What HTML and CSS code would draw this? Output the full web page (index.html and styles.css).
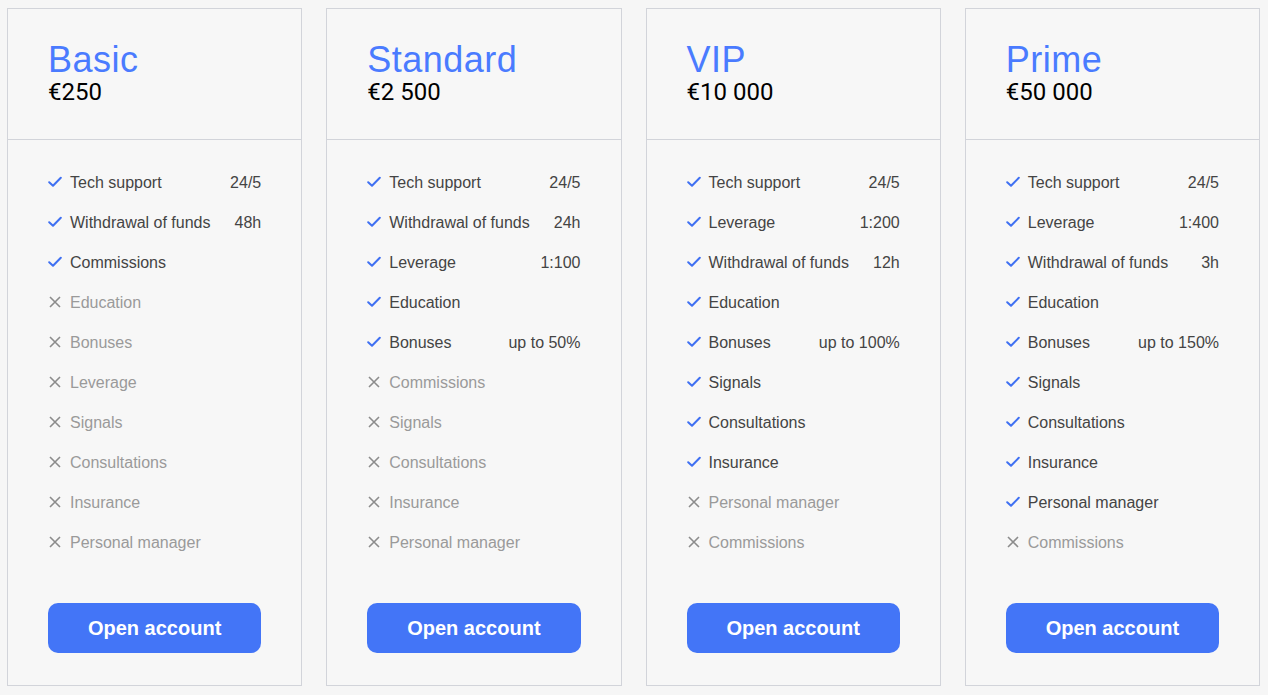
FILE: index.html
```html
<!DOCTYPE html>
<html lang="en">
<head>
<meta charset="utf-8">
<title>Plans</title>
<link rel="stylesheet" href="styles.css">
</head>
<body>
<svg width="0" height="0" class="defs">
  <defs>
    <symbol id="ok" viewBox="0 0 14 12"><path d="M1.2 6.2 L5 9.8 L12.8 1.8" fill="none" stroke="currentColor" stroke-width="2" stroke-linecap="round" stroke-linejoin="round"/></symbol>
    <symbol id="no" viewBox="0 0 14 12"><path d="M2 1 L12 11 M12 1 L2 11" fill="none" stroke="currentColor" stroke-width="1.6"/></symbol>
  </defs>
</svg>
<div class="plans">
  <div class="card">
    <div class="head"><div class="name">Basic</div><div class="price">€250</div></div>
    <ul class="list">
      <li class="on"><svg class="ic"><use href="#ok"/></svg><span>Tech support</span><span class="val">24/5</span></li>
      <li class="on"><svg class="ic"><use href="#ok"/></svg><span>Withdrawal of funds</span><span class="val">48h</span></li>
      <li class="on"><svg class="ic"><use href="#ok"/></svg><span>Commissions</span></li>
      <li class="off"><svg class="ic"><use href="#no"/></svg><span>Education</span></li>
      <li class="off"><svg class="ic"><use href="#no"/></svg><span>Bonuses</span></li>
      <li class="off"><svg class="ic"><use href="#no"/></svg><span>Leverage</span></li>
      <li class="off"><svg class="ic"><use href="#no"/></svg><span>Signals</span></li>
      <li class="off"><svg class="ic"><use href="#no"/></svg><span>Consultations</span></li>
      <li class="off"><svg class="ic"><use href="#no"/></svg><span>Insurance</span></li>
      <li class="off"><svg class="ic"><use href="#no"/></svg><span>Personal manager</span></li>
    </ul>
    <div class="foot"><a class="btn" href="#">Open account</a></div>
  </div>
  <div class="card">
    <div class="head"><div class="name">Standard</div><div class="price">€2 500</div></div>
    <ul class="list">
      <li class="on"><svg class="ic"><use href="#ok"/></svg><span>Tech support</span><span class="val">24/5</span></li>
      <li class="on"><svg class="ic"><use href="#ok"/></svg><span>Withdrawal of funds</span><span class="val">24h</span></li>
      <li class="on"><svg class="ic"><use href="#ok"/></svg><span>Leverage</span><span class="val">1:100</span></li>
      <li class="on"><svg class="ic"><use href="#ok"/></svg><span>Education</span></li>
      <li class="on"><svg class="ic"><use href="#ok"/></svg><span>Bonuses</span><span class="val">up to 50%</span></li>
      <li class="off"><svg class="ic"><use href="#no"/></svg><span>Commissions</span></li>
      <li class="off"><svg class="ic"><use href="#no"/></svg><span>Signals</span></li>
      <li class="off"><svg class="ic"><use href="#no"/></svg><span>Consultations</span></li>
      <li class="off"><svg class="ic"><use href="#no"/></svg><span>Insurance</span></li>
      <li class="off"><svg class="ic"><use href="#no"/></svg><span>Personal manager</span></li>
    </ul>
    <div class="foot"><a class="btn" href="#">Open account</a></div>
  </div>
  <div class="card">
    <div class="head"><div class="name">VIP</div><div class="price">€10 000</div></div>
    <ul class="list">
      <li class="on"><svg class="ic"><use href="#ok"/></svg><span>Tech support</span><span class="val">24/5</span></li>
      <li class="on"><svg class="ic"><use href="#ok"/></svg><span>Leverage</span><span class="val">1:200</span></li>
      <li class="on"><svg class="ic"><use href="#ok"/></svg><span>Withdrawal of funds</span><span class="val">12h</span></li>
      <li class="on"><svg class="ic"><use href="#ok"/></svg><span>Education</span></li>
      <li class="on"><svg class="ic"><use href="#ok"/></svg><span>Bonuses</span><span class="val">up to 100%</span></li>
      <li class="on"><svg class="ic"><use href="#ok"/></svg><span>Signals</span></li>
      <li class="on"><svg class="ic"><use href="#ok"/></svg><span>Consultations</span></li>
      <li class="on"><svg class="ic"><use href="#ok"/></svg><span>Insurance</span></li>
      <li class="off"><svg class="ic"><use href="#no"/></svg><span>Personal manager</span></li>
      <li class="off"><svg class="ic"><use href="#no"/></svg><span>Commissions</span></li>
    </ul>
    <div class="foot"><a class="btn" href="#">Open account</a></div>
  </div>
  <div class="card">
    <div class="head"><div class="name">Prime</div><div class="price">€50 000</div></div>
    <ul class="list">
      <li class="on"><svg class="ic"><use href="#ok"/></svg><span>Tech support</span><span class="val">24/5</span></li>
      <li class="on"><svg class="ic"><use href="#ok"/></svg><span>Leverage</span><span class="val">1:400</span></li>
      <li class="on"><svg class="ic"><use href="#ok"/></svg><span>Withdrawal of funds</span><span class="val">3h</span></li>
      <li class="on"><svg class="ic"><use href="#ok"/></svg><span>Education</span></li>
      <li class="on"><svg class="ic"><use href="#ok"/></svg><span>Bonuses</span><span class="val">up to 150%</span></li>
      <li class="on"><svg class="ic"><use href="#ok"/></svg><span>Signals</span></li>
      <li class="on"><svg class="ic"><use href="#ok"/></svg><span>Consultations</span></li>
      <li class="on"><svg class="ic"><use href="#ok"/></svg><span>Insurance</span></li>
      <li class="on"><svg class="ic"><use href="#ok"/></svg><span>Personal manager</span></li>
      <li class="off"><svg class="ic"><use href="#no"/></svg><span>Commissions</span></li>
    </ul>
    <div class="foot"><a class="btn" href="#">Open account</a></div>
  </div>
</div>
</body>
</html>
```
FILE: styles.css
```css
html, body {
  margin: 0;
  padding: 0;
  background: #f6f6f6;
}
body {
  padding: 8px 8px 8px 7px;
  font-family: "Liberation Sans", Arial, sans-serif;
}
.defs {
  position: absolute;
  width: 0;
  height: 0;
  overflow: hidden;
}
.plans {
  display: grid;
  grid-template-columns: repeat(4, 1fr);
  column-gap: 24px;
}
.card {
  border: 1px solid #d2d4da;
  background: #f7f7f7;
  display: flex;
  flex-direction: column;
}
.head {
  padding: 33px 40px 33px;
  border-bottom: 1px solid #d2d4da;
}
.name {
  font-family: "Liberation Sans", sans-serif;
  font-size: 36px;
  line-height: 36px;
  color: #4a7bff;
  letter-spacing: 0.5px;
}
.price {
  font-family: Roboto, sans-serif;
  font-size: 24px;
  line-height: 28px;
  color: #000;
}
.list {
  list-style: none;
  margin: 0;
  padding: 23px 40px 0;
}
.list li {
  display: flex;
  align-items: center;
  height: 40px;
  font-size: 16px;
  color: #444;
}
.list li.off {
  color: #9a9a9a;
}
.ic {
  width: 14px;
  height: 12px;
  margin-right: 8px;
  flex: none;
  position: relative;
  top: -1px;
}
.on .ic {
  color: #3f70f2;
}
.off .ic {
  color: #8c8c8c;
}
.val {
  margin-left: auto;
}
.foot {
  padding: 40px 40px 32px;
}
.btn {
  display: flex;
  align-items: center;
  justify-content: center;
  height: 50px;
  border-radius: 10px;
  background: #4375f7;
  color: #fff;
  font-weight: bold;
  font-size: 20px;
  text-decoration: none;
}
```
